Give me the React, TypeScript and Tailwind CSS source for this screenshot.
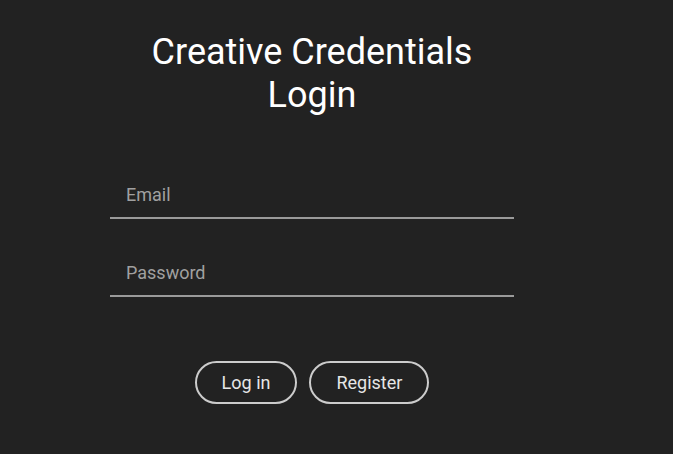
import React from 'react';

export default function App() {
  return (
    <div className="min-h-screen w-full bg-[#222222] font-['Roboto',sans-serif]">
      <div className="w-[624px] flex flex-col items-center pt-[31px]">
        <h1 className="text-[36px] leading-[43px] text-white text-center font-normal">
          Creative Credentials
          <br />
          Login
        </h1>

        <form className="mt-[60px] w-[404px] flex flex-col gap-[36px]" onSubmit={(e) => e.preventDefault()}>
          <input
            type="email"
            placeholder="Email"
            className="h-[42px] w-full bg-transparent border-b-2 border-[#9a9a9a] pl-4 pb-[6px] text-[18px] text-white placeholder:text-[#a0a0a0] outline-none"
          />
          <input
            type="password"
            placeholder="Password"
            className="h-[42px] w-full bg-transparent border-b-2 border-[#9a9a9a] pl-4 pb-[6px] text-[18px] text-white placeholder:text-[#a0a0a0] outline-none"
          />
        </form>

        <div className="mt-[64px] flex gap-3">
          <button className="h-[43px] px-[25px] rounded-full border-2 border-[#cccccc] text-[18px] text-[#e6e6e6]">
            Log in
          </button>
          <button className="h-[43px] px-[25px] rounded-full border-2 border-[#cccccc] text-[18px] text-[#e6e6e6]">
            Register
          </button>
        </div>
      </div>
    </div>
  );
}
